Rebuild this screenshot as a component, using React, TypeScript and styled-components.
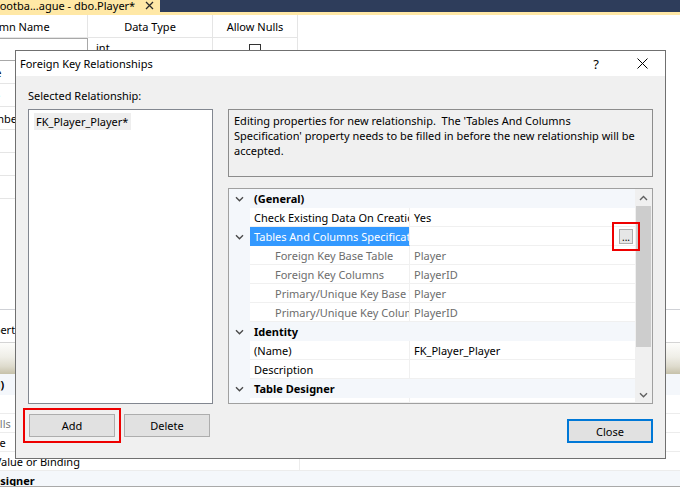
import styled, { createGlobalStyle } from "styled-components";

const FONT = '"Noto Sans", "Open Sans", sans-serif';

const GlobalStyle = createGlobalStyle`
  html, body { margin: 0; padding: 0; }
  body {
    font-family: ${FONT};
    font-size: 11px;
    color: #000;
    background: #fff;
  }
  * { box-sizing: border-box; }
`;

const Screen = styled.div`
  position: relative;
  width: 680px;
  height: 487px;
  overflow: hidden;
  display: flex;
  flex-direction: column;
  background: #fff;
`;

/* ---------- document tab strip ---------- */

const TabStrip = styled.div`
  display: flex;
  height: 15px;
  flex-shrink: 0;
`;

const DocTab = styled.div`
  width: 160px;
  background: #ffe8a6;
  display: flex;
  align-items: flex-start;
  justify-content: space-between;
  padding-right: 6px;
  overflow: hidden;
`;

const DocTabTitle = styled.span`
  font-size: 11px;
  line-height: 12px;
  margin-left: -6px;
  white-space: nowrap;
`;

const TabFill = styled.div`
  flex: 1;
  background: #2e3d5b;
  border-bottom: 3px solid #ffe8a6;
`;

/* ---------- table designer grid ---------- */

const DesignerGrid = styled.div`
  margin-left: -62px;
  width: 360px;
  flex-shrink: 0;
`;

const GridRow = styled.div`
  display: flex;
  height: 23px;
`;

const HeaderCell = styled.div<{ $w: number }>`
  width: ${(p) => p.$w}px;
  flex-shrink: 0;
  border-right: 1px solid #e5e5e5;
  border-bottom: 1px solid #e5e5e5;
  display: flex;
  align-items: center;
  justify-content: center;
  white-space: nowrap;
`;

const NameCell = styled.div<{ $selected?: boolean }>`
  width: 150px;
  flex-shrink: 0;
  padding-left: 9px;
  display: flex;
  align-items: center;
  white-space: nowrap;
  border: 1px solid ${(p) => (p.$selected ? "#a8a8a8" : "transparent")};
  border-bottom-color: ${(p) => (p.$selected ? "#a8a8a8" : "#e5e5e5")};
`;

const DataCell = styled.div<{ $w: number }>`
  width: ${(p) => p.$w}px;
  flex-shrink: 0;
  padding: 2px 0 0 8px;
  display: flex;
  align-items: flex-start;
  border-right: 1px solid #e5e5e5;
`;

const CheckCell = styled(DataCell)`
  justify-content: center;
  padding: 6px 0 0 0;
`;

const CheckBox = styled.span`
  width: 12px;
  height: 12px;
  border: 1px solid #333;
  background: #fff;
`;

const Filler = styled.div`
  flex: 1;
`;

/* ---------- background properties window ---------- */

const PropertiesPane = styled.div`
  height: 177px;
  flex-shrink: 0;
  overflow: hidden;
  border-top: 1px solid #cfd1d6;
  display: flex;
  flex-direction: column;
`;

const PaneTitle = styled.div`
  height: 33px;
  flex-shrink: 0;
  padding-top: 6px;
  display: flex;
  align-items: center;
  border-bottom: 1px solid #d4d4d4;
  white-space: nowrap;
`;

const PaneTitleText = styled.span`
  margin-left: -24px;
`;

const PaneToolbar = styled.div`
  height: 31px;
  flex-shrink: 0;
  background: linear-gradient(to bottom, #fdfdfb 0%, #efeee7 45%, #dedbcd 75%, #c6c1aa 100%);
`;

const BgRows = styled.div`
  margin-left: -66px;
  display: flex;
  flex-direction: column;
`;

const BgRow = styled.div<{ $h: number; $cat?: boolean }>`
  display: flex;
  flex-shrink: 0;
  height: ${(p) => p.$h}px;
  background: ${(p) => (p.$cat ? "#f4f7fb" : "#fff")};
  font-weight: ${(p) => (p.$cat ? 700 : 400)};
`;

const BgGutter = styled.div`
  width: 20px;
  flex-shrink: 0;
  background: #f4f7fb;
`;

const BgName = styled.div<{ $cat?: boolean; $dim?: boolean }>`
  width: 346px;
  flex-shrink: 0;
  display: flex;
  align-items: center;
  white-space: nowrap;
  color: ${(p) => (p.$dim ? "#7a7a7a" : "#000")};
  border-right: 1px solid ${(p) => (p.$cat ? "transparent" : "#ececec")};
  border-bottom: 1px solid ${(p) => (p.$cat ? "transparent" : "#ececec")};
`;

const BgValue = styled.div<{ $cat?: boolean }>`
  flex: 1;
  border-bottom: 1px solid ${(p) => (p.$cat ? "transparent" : "#ececec")};
`;

const BottomEdge = styled.div`
  height: 1px;
  flex-shrink: 0;
  background: #a9a9a9;
`;

/* ---------- dialog ---------- */

const Dialog = styled.div`
  position: absolute;
  left: 15px;
  top: 50px;
  width: 651px;
  height: 409px;
  border: 1px solid #707070;
  background: #f0f0f0;
  display: flex;
  flex-direction: column;
`;

const TitleBar = styled.div`
  height: 25px;
  flex-shrink: 0;
  background: #fff;
  display: flex;
  align-items: center;
`;

const TitleText = styled.span`
  flex: 1;
  padding-left: 4px;
`;

const CaptionButton = styled.div`
  width: 46px;
  height: 25px;
  display: flex;
  align-items: center;
  justify-content: center;
  font-size: 13px;
`;

const DialogBody = styled.div`
  display: flex;
  gap: 15px;
  padding: 13px 11px 0 12px;
`;

const LeftColumn = styled.div`
  width: 185px;
  display: flex;
  flex-direction: column;
`;

const Label = styled.div`
  height: 14px;
  line-height: 14px;
`;

const ListBox = styled.div`
  margin-top: 6px;
  height: 295px;
  background: #fff;
  border: 1px solid #828790;
  padding: 3px 0 0 5px;
`;

const ListItem = styled.div`
  display: inline-block;
  height: 17px;
  line-height: 17px;
  padding: 0 3px 0 2px;
  background: #eeeeee;
`;

const ButtonRow = styled.div`
  display: flex;
  gap: 9px;
  margin-top: 10px;
  padding-left: 1px;
`;

const PushButton = styled.button<{ $mark?: boolean; $default?: boolean }>`
  width: 86px;
  height: ${(p) => (p.$default ? 24 : 23)}px;
  padding: 0;
  font-family: ${FONT};
  font-size: 11px;
  color: #000;
  background: #e1e1e1;
  border: ${(p) => (p.$default ? "2px solid #0078d7" : "1px solid #adadad")};
  outline: ${(p) => (p.$mark ? "2px solid #ee0000" : "none")};
  outline-offset: 4px;
`;

const RightColumn = styled.div`
  width: 425px;
  padding-top: 20px;
  display: flex;
  flex-direction: column;
`;

const DescriptionBox = styled.div`
  height: 68px;
  border: 1px solid #8c8c8c;
  padding: 3px 5px;
  line-height: 15px;
  white-space: nowrap;
`;

const PropGrid = styled.div`
  margin-top: 11px;
  height: 216px;
  border: 1px solid #a0a0a0;
  background: #fff;
  display: flex;
`;

const PropRows = styled.div`
  flex: 1;
  display: flex;
  flex-direction: column;
`;

const PropRow = styled.div<{ $cat?: boolean; $fill?: boolean }>`
  display: flex;
  height: 19px;
  flex: ${(p) => (p.$fill ? "1 1 0" : "0 0 auto")};
  background: ${(p) => (p.$cat ? "#f4f7fb" : "#fff")};
`;

const Gutter = styled.div`
  width: 21px;
  flex-shrink: 0;
  background: #f4f7fb;
  display: flex;
  align-items: center;
  justify-content: center;
  padding-right: 1px;
`;

const CategoryLabel = styled.div`
  flex: 1;
  padding-left: 4px;
  display: flex;
  align-items: center;
  font-weight: 700;
`;

const PropName = styled.div<{ $sub?: boolean; $selected?: boolean }>`
  width: 160px;
  flex-shrink: 0;
  overflow: hidden;
  white-space: nowrap;
  display: flex;
  align-items: center;
  padding-left: ${(p) => (p.$sub ? 25 : 4)}px;
  color: ${(p) => (p.$selected ? "#fff" : p.$sub ? "#6d6d6d" : "#000")};
  background: ${(p) => (p.$selected ? "#3399ff" : "#fff")};
  border-right: 1px solid #f0f0f0;
  border-bottom: 1px solid ${(p) => (p.$selected ? "#3399ff" : "#f0f0f0")};
`;

const PropValue = styled.div<{ $sub?: boolean }>`
  flex: 1;
  display: flex;
  align-items: center;
  padding-left: 4px;
  white-space: nowrap;
  color: ${(p) => (p.$sub ? "#6d6d6d" : "#000")};
  border-bottom: 1px solid #f0f0f0;
`;

const BuilderButton = styled.div`
  position: relative;
  z-index: 1;
  margin-left: auto;
  margin-right: 2px;
  width: 14px;
  height: 15px;
  background: #e6e6e6;
  border: 1px solid #adadad;
  font-size: 10px;
  line-height: 14px;
  text-align: center;
  outline: 2px solid #ee0000;
  outline-offset: 5px;
`;

const ScrollBar = styled.div`
  width: 17px;
  flex-shrink: 0;
  background: #f0f0f0;
  display: flex;
  flex-direction: column;
  align-items: center;
`;

const ScrollArrow = styled.div`
  height: 17px;
  width: 100%;
  display: flex;
  align-items: center;
  justify-content: center;
`;

const ScrollThumb = styled.div`
  width: 15px;
  height: 141px;
  background: #cdcdcd;
`;

const ScrollTrack = styled.div`
  flex: 1;
`;

const DialogFooter = styled.div`
  display: flex;
  justify-content: flex-end;
  margin-top: 15px;
`;

const Chevron = ({ up = false, color = "#4a4a4a" }: { up?: boolean; color?: string }) => (
  <svg width="9" height="6" viewBox="0 0 9 6">
    <polyline
      points={up ? "1,5 4.5,1.5 8,5" : "1,1.2 4.5,4.7 8,1.2"}
      fill="none"
      stroke={color}
      strokeWidth="1.4"
    />
  </svg>
);

type PropItem =
  | { kind: "cat"; label: string }
  | {
      kind: "prop";
      name: string;
      value?: string;
      sub?: boolean;
      selected?: boolean;
      expandable?: boolean;
      builder?: boolean;
    };

const props: PropItem[] = [
  { kind: "cat", label: "(General)" },
  { kind: "prop", name: "Check Existing Data On Creation Or Re-Enabling", value: "Yes" },
  { kind: "prop", name: "Tables And Columns Specification", selected: true, expandable: true, builder: true },
  { kind: "prop", name: "Foreign Key Base Table", value: "Player", sub: true },
  { kind: "prop", name: "Foreign Key Columns", value: "PlayerID", sub: true },
  { kind: "prop", name: "Primary/Unique Key Base Table", value: "Player", sub: true },
  { kind: "prop", name: "Primary/Unique Key Columns", value: "PlayerID", sub: true },
  { kind: "cat", label: "Identity" },
  { kind: "prop", name: "(Name)", value: "FK_Player_Player" },
  { kind: "prop", name: "Description", value: "" },
  { kind: "cat", label: "Table Designer" },
];

const columns = ["PlayerID", "FirstName", "LastName", "JerseyNumber", "Position", "TeamID", ""];

const bgProps = [
  { name: "(General)", cat: true, h: 21 },
  { name: "(Name)", h: 19 },
  { name: "Allow Nulls", dim: true, h: 19 },
  { name: "Data Type", h: 19 },
  { name: "Default Value or Binding", h: 19 },
  { name: "Table Designer", cat: true, h: 19 },
];

const App = () => {
  return (
    <>
      <GlobalStyle />
      <Screen>
        <TabStrip>
          <DocTab>
            <DocTabTitle>Footba...ague - dbo.Player*</DocTabTitle>
            <svg width="9" height="9" viewBox="0 0 9 9" style={{ marginTop: 1 }}>
              <path d="M1 1 L8 8 M8 1 L1 8" stroke="#2a2a2a" strokeWidth="1.3" />
            </svg>
          </DocTab>
          <TabFill />
        </TabStrip>

        <DesignerGrid>
          <GridRow>
            <HeaderCell $w={150}>Column Name</HeaderCell>
            <HeaderCell $w={125}>Data Type</HeaderCell>
            <HeaderCell $w={85}>Allow Nulls</HeaderCell>
          </GridRow>
          {columns.map((c, i) => (
            <GridRow key={i}>
              <NameCell $selected={i === 0}>{c}</NameCell>
              {i === 0 && (
                <>
                  <DataCell $w={125}>int</DataCell>
                  <CheckCell $w={85}>
                    <CheckBox />
                  </CheckCell>
                </>
              )}
            </GridRow>
          ))}
        </DesignerGrid>

        <Filler />

        <PropertiesPane>
          <PaneTitle>
            <PaneTitleText>Properties</PaneTitleText>
          </PaneTitle>
          <PaneToolbar />
          <BgRows>
            {bgProps.map((r) => (
              <BgRow key={r.name} $h={r.h} $cat={r.cat}>
                <BgGutter />
                <BgName $cat={r.cat} $dim={r.dim}>
                  {r.name}
                </BgName>
                <BgValue $cat={r.cat} />
              </BgRow>
            ))}
          </BgRows>
        </PropertiesPane>
        <BottomEdge />

        <Dialog>
          <TitleBar>
            <TitleText>Foreign Key Relationships</TitleText>
            <CaptionButton>?</CaptionButton>
            <CaptionButton>
              <svg width="11" height="11" viewBox="0 0 11 11">
                <path d="M0.5 0.5 L10.5 10.5 M10.5 0.5 L0.5 10.5" stroke="#000" strokeWidth="1" />
              </svg>
            </CaptionButton>
          </TitleBar>

          <DialogBody>
            <LeftColumn>
              <Label>Selected Relationship:</Label>
              <ListBox>
                <ListItem>FK_Player_Player*</ListItem>
              </ListBox>
              <ButtonRow>
                <PushButton $mark>Add</PushButton>
                <PushButton>Delete</PushButton>
              </ButtonRow>
            </LeftColumn>

            <RightColumn>
              <DescriptionBox>
                Editing properties for new relationship.&nbsp; The 'Tables And Columns
                <br />
                Specification' property needs to be filled in before the new relationship will be
                <br />
                accepted.
              </DescriptionBox>

              <PropGrid>
                <PropRows>
                  {props.map((p, i) =>
                    p.kind === "cat" ? (
                      <PropRow $cat key={i}>
                        <Gutter>
                          <Chevron />
                        </Gutter>
                        <CategoryLabel>{p.label}</CategoryLabel>
                      </PropRow>
                    ) : (
                      <PropRow key={i}>
                        <Gutter>{p.expandable && <Chevron />}</Gutter>
                        <PropName $sub={p.sub} $selected={p.selected}>
                          {p.name}
                        </PropName>
                        <PropValue $sub={p.sub}>
                          {p.value}
                          {p.builder && <BuilderButton>...</BuilderButton>}
                        </PropValue>
                      </PropRow>
                    )
                  )}
                  <PropRow $fill>
                    <Gutter />
                    <PropName />
                    <PropValue />
                  </PropRow>
                </PropRows>
                <ScrollBar>
                  <ScrollArrow>
                    <Chevron up color="#606060" />
                  </ScrollArrow>
                  <ScrollThumb />
                  <ScrollTrack />
                  <ScrollArrow>
                    <Chevron color="#606060" />
                  </ScrollArrow>
                </ScrollBar>
              </PropGrid>

              <DialogFooter>
                <PushButton $default>Close</PushButton>
              </DialogFooter>
            </RightColumn>
          </DialogBody>
        </Dialog>
      </Screen>
    </>
  );
};

export default App;
